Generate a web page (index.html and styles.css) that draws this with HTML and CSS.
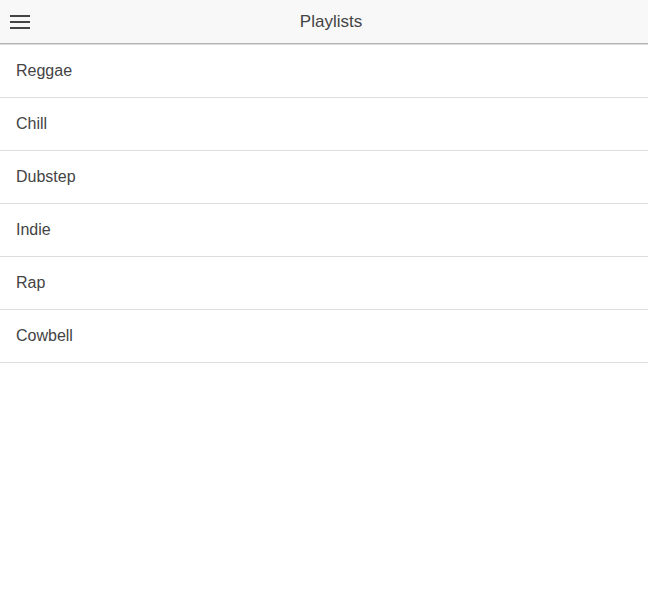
FILE: index.html
```html
<!DOCTYPE html>
<html>
<head>
<meta charset="utf-8">
<link rel="stylesheet" href="styles.css">
</head>
<body>
<header class="bar">
  <button class="menu-btn" aria-label="Menu">
    <svg width="20" height="14" viewBox="0 0 20 14"><rect x="0" y="0" width="20" height="2" fill="#444"/><rect x="0" y="6" width="20" height="2" fill="#444"/><rect x="0" y="12" width="20" height="2" fill="#444"/></svg>
  </button>
  <h1 class="title">Playlists</h1>
</header>
<ul class="list">
  <li class="item">Reggae</li>
  <li class="item">Chill</li>
  <li class="item">Dubstep</li>
  <li class="item">Indie</li>
  <li class="item">Rap</li>
  <li class="item">Cowbell</li>
</ul>
</body>
</html>
```
FILE: styles.css
```css
html, body {
  margin: 0;
  padding: 0;
  background: #fff;
  font-family: "Liberation Sans", Arial, sans-serif;
  color: #444;
}
.bar {
  position: relative;
  height: 43px;
  background: #f8f8f8;
  border-bottom: 1px solid #b2b2b2;
  display: flex;
  align-items: center;
}
.menu-btn {
  position: absolute;
  left: 10px;
  top: 15px;
  padding: 0;
  margin: 0;
  border: 0;
  background: none;
  width: 20px;
  height: 14px;
  display: block;
}
.menu-btn svg { display: block; }
.title {
  flex: 1;
  margin: 0;
  padding-left: 14px;
  text-align: center;
  font-size: 17px;
  font-weight: 500;
  line-height: 43px;
  color: #444;
}
.list {
  list-style: none;
  margin: 0;
  padding: 0;
  border-top: 1px solid #ddd;
}
.item {
  height: 52px;
  line-height: 52px;
  padding: 0 16px;
  font-size: 16px;
  border-bottom: 1px solid #ddd;
  color: #444;
}
```
